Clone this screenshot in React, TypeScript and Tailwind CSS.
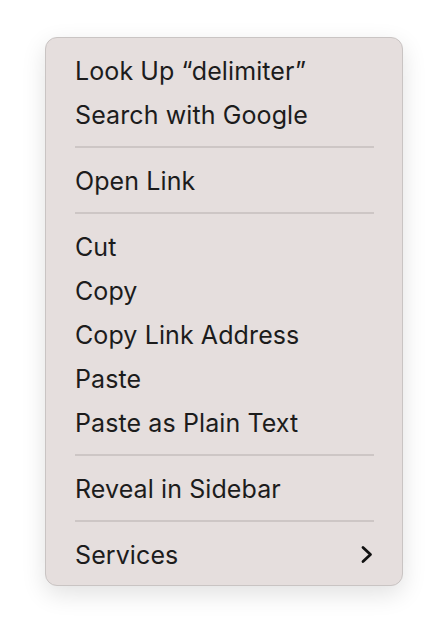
import React from 'react';

type Entry = { label: string; submenu?: boolean } | 'sep';

const entries: Entry[] = [
  { label: 'Look Up \u201Cdelimiter\u201D' },
  { label: 'Search with Google' },
  'sep',
  { label: 'Open Link' },
  'sep',
  { label: 'Cut' },
  { label: 'Copy' },
  { label: 'Copy Link Address' },
  { label: 'Paste' },
  { label: 'Paste as Plain Text' },
  'sep',
  { label: 'Reveal in Sidebar' },
  'sep',
  { label: 'Services', submenu: true },
];

const Chevron = () => (
  <svg width="14" height="19" viewBox="0 0 14 19" fill="none">
    <path d="M3 2.5 L10.5 9.5 L3 16.5" stroke="#111" strokeWidth="2.8" strokeLinecap="round" strokeLinejoin="round" />
  </svg>
);

const App: React.FC = () => {
  return (
    <div className="w-[448px] h-[640px] bg-white pt-[37px] pl-[45px]" style={{ fontFamily: 'Inter, "Noto Sans", sans-serif' }}>
      <div className="w-[358px] h-[549px] rounded-[12px] border border-[#c9c4c3] bg-[#e5dedd] py-[10px] pl-[29px] pr-[28px] shadow-[0_8px_24px_rgba(0,0,0,0.12)]">
        {entries.map((e, i) =>
          e === 'sep' ? (
            <div key={i} className="h-[22px] flex items-center">
              <div className="h-[2px] w-full bg-[#cdc6c5]" />
            </div>
          ) : (
            <div key={i} className="h-[44px] flex items-center justify-between text-[25px] text-[#1c1c1c] tracking-[0.1px]">
              <span className="pt-[3px]">{e.label}</span>
              {e.submenu && <Chevron />}
            </div>
          )
        )}
      </div>
    </div>
  );
};

export default App;
